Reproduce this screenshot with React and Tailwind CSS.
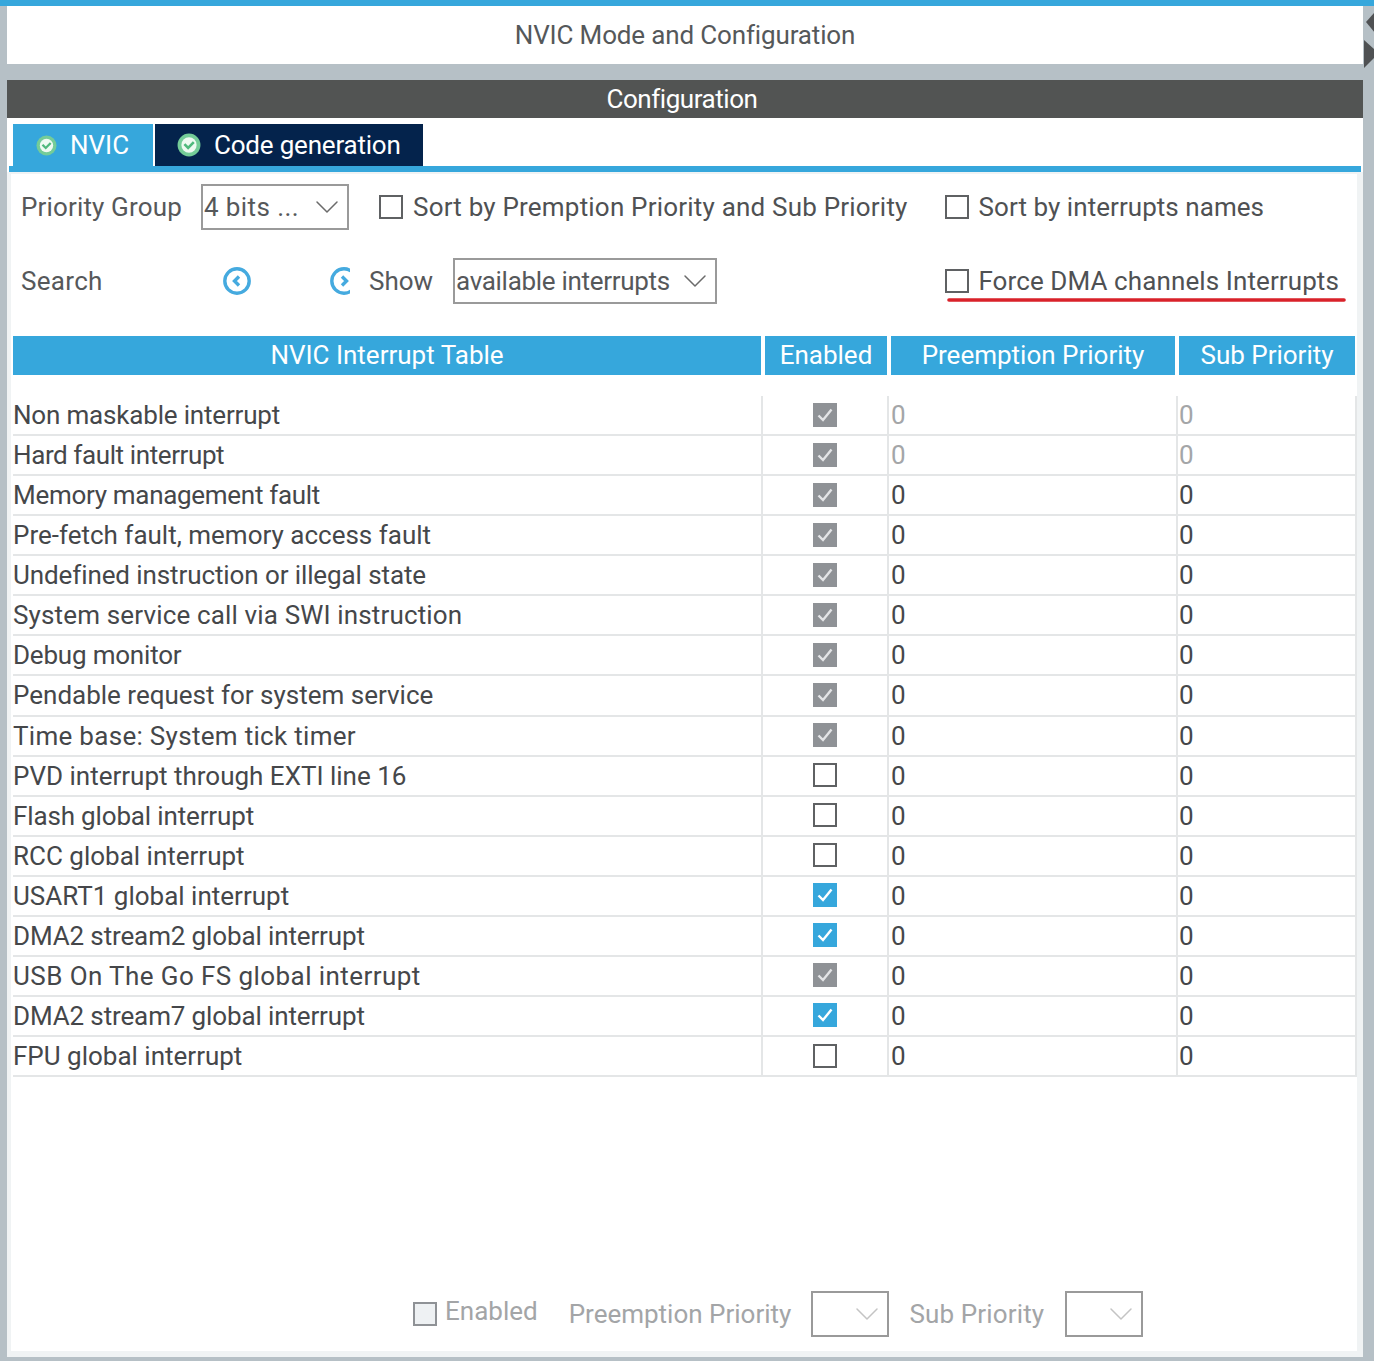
import { ChevronDown } from "lucide-react";

const font = "font-['Roboto','Liberation_Sans',sans-serif]";

const rows = [
  ["Non maskable interrupt", "gray", "tracking-[-0.18px]", true],
  ["Hard fault interrupt", "gray", "tracking-[-0.4px]", true],
  ["Memory management fault", "gray", "tracking-[-0.3px]"],
  ["Pre-fetch fault, memory access fault", "gray", ""],
  ["Undefined instruction or illegal state", "gray", "tracking-[-0.1px]"],
  ["System service call via SWI instruction", "gray", "tracking-[0.15px]"],
  ["Debug monitor", "gray", "tracking-[-0.2px]"],
  ["Pendable request for system service", "gray", ""],
  ["Time base: System tick timer", "gray", "tracking-[0.3px]"],
  ["PVD interrupt through EXTI line 16", "off", ""],
  ["Flash global interrupt", "off", "tracking-[-0.15px]"],
  ["RCC global interrupt", "off", ""],
  ["USART1 global interrupt", "blue", ""],
  ["DMA2 stream2 global interrupt", "blue", "tracking-[-0.13px]"],
  ["USB On The Go FS global interrupt", "gray", "tracking-[0.42px]"],
  ["DMA2 stream7 global interrupt", "blue", "tracking-[-0.13px]"],
  ["FPU global interrupt", "off", ""],
];

function Check({ state }) {
  if (state === "off") {
    return <span className="block w-6 h-6 mb-[2px] border-2 border-[#5f6163] bg-white" />;
  }
  return (
    <span
      className={`flex items-center justify-center w-6 h-6 mb-[2px] ${
        state === "blue" ? "bg-[#36a7dc]" : "bg-[#8f9296]"
      }`}
    >
      <svg width="18" height="16" viewBox="0 0 18 16" fill="none">
        <path d="M2.5 8.5 L7 13 L15.5 2.5" stroke={state === "blue" ? "#ffffff" : "#e3e4e6"} strokeWidth="2.4" />
      </svg>
    </span>
  );
}

function TabIcon({ size = 22 }) {
  return (
    <svg width={size} height={size} viewBox="0 0 22 22">
      <circle cx="11" cy="11" r="10.5" fill="#74cc98" />
      <circle cx="11" cy="11" r="7" fill="#eefaf2" />
      <path d="M6.8 10.2 L10.2 13.6 L15.4 8.4" fill="none" stroke="#4fb97d" strokeWidth="2.4" />
    </svg>
  );
}

function Select({ className, children, labelClass = "", chevronClass = "text-[#6b6b6b]" }) {
  return (
    <div className={`flex items-center justify-between h-[46px] border-2 border-[#9a9a9a] ${className}`}>
      <span className={`pl-[1px] text-[26px] text-[#56585a] whitespace-nowrap ${labelClass}`}>{children}</span>
      <ChevronDown className={`w-10 h-10 shrink-0 ${chevronClass}`} strokeWidth={0.9} />
    </div>
  );
}

function Box() {
  return <span className="block w-6 h-6 shrink-0 border-2 border-[#5f6163] bg-white" />;
}

function RoundArrow({ left }) {
  return (
    <svg width="28" height="28" viewBox="0 0 28 28" fill="none" className="shrink-0">
      <circle cx="14" cy="14" r="12.2" stroke="#45aadf" strokeWidth="3.4" />
      <path
        d={left ? "M16 9.5 L11.5 14 L16 18.5" : "M12 9.5 L16.5 14 L12 18.5"}
        stroke="#45aadf"
        strokeWidth="3.4"
      />
    </svg>
  );
}

export default function App() {
  return (
    <div className={`${font} relative flex flex-col w-[1374px] h-[1366px] bg-[#b6c0c6] overflow-hidden`}>
      <div className="h-[6px] shrink-0 bg-[#36a7dc]" />

      {/* 상단 타이틀 */}
      <div className="ml-[7px] mr-[11px] h-[58px] shrink-0 flex items-center justify-center bg-white text-[26px] tracking-[-0.15px] text-[#55585a]">
        NVIC Mode and Configuration
      </div>

      <div className="ml-[7px] mr-[11px] mt-4 h-[38px] shrink-0 flex items-center justify-center pr-[6px] bg-[#525453] text-[26px] tracking-[-0.45px] text-white">
        Configuration
      </div>

      <div className="ml-[7px] mr-[11px] h-[1239px] shrink-0 bg-white flex flex-col">
        {/* 탭 */}
        <div className="flex pl-[6px] pt-[6px] h-[48px] shrink-0">
          <div className="flex items-center w-[140px] pl-[23px] gap-[13px] bg-[#36a7dc] text-[26px] text-white">
            <TabIcon size={21} />
            <span>NVIC</span>
          </div>
          <div className="flex items-center w-[268px] ml-[2px] pl-[22px] gap-[13px] bg-[#04234c] text-[26px] tracking-[-0.2px] text-white">
            <TabIcon size={24} />
            <span>Code generation</span>
          </div>
        </div>
        <div className="ml-[2px] mr-[2px] h-[6px] shrink-0 bg-[#36a7dc]" />

        <div className="flex-1 flex flex-col pl-[4px] pr-[6px] pb-[6px] pt-[2px] bg-[#f0f3f4]">
          <div className="flex-1 flex flex-col bg-white text-[26px] text-[#56585a]">
            {/* 옵션 영역 */}
            <div className="relative mt-[10px] h-[46px] flex items-center pl-[10px]">
              <span className="w-[180px] whitespace-nowrap tracking-[0.15px]">Priority Group</span>
              <Select className="w-[148px]" labelClass="tracking-[0.4px]">4 bits ...</Select>
              <div className="ml-[30px] flex items-center gap-[10px] whitespace-nowrap tracking-[0.2px] text-[#4f5153]">
                <Box />
                Sort by Premption Priority and Sub Priority
              </div>
              <div className="ml-[37px] flex items-center gap-[10px] whitespace-nowrap tracking-[0.05px] text-[#4f5153]">
                <Box />
                Sort by interrupts names
              </div>
            </div>

            <div className="relative mt-[28px] h-[46px] flex items-center pl-[10px]">
              <span className="w-[202px] tracking-[0.3px]">Search</span>
              <RoundArrow left />
              <span className="ml-[79px] w-[20px] overflow-hidden">
                <RoundArrow />
              </span>
              <span className="ml-[19px] w-[84px]">Show</span>
              <Select className="w-[264px]" labelClass="tracking-[-0.3px]">available interrupts</Select>
              <div className="ml-auto mr-[18px] flex items-center gap-[9px] whitespace-nowrap tracking-[0.1px] text-[#4f5153]">
                <Box />
                Force DMA channels Interrupts
              </div>
              {/* 빨간 밑줄 */}
              <svg
                width="402"
                height="8"
                viewBox="0 0 402 8"
                fill="none"
                className="absolute left-[935px] top-[38px]"
              >
                <path d="M3 4 L398 4" stroke="#d9222a" strokeWidth="3.6" strokeLinecap="round" />
              </svg>
            </div>

            {/* 테이블 헤더 */}
            <div className="mt-[32px] ml-[2px] mr-[2px] grid grid-cols-[748px_122px_284px_176px] gap-x-[4px] h-[38px] shrink-0 text-white">
              <div className="flex items-center justify-center bg-[#36a7dc]">NVIC Interrupt Table</div>
              <div className="flex items-center justify-center bg-[#36a7dc]">Enabled</div>
              <div className="flex items-center justify-center bg-[#36a7dc]">Preemption Priority</div>
              <div className="flex items-center justify-center bg-[#36a7dc]">Sub Priority</div>
            </div>

            {/* 테이블 본문 */}
            <div className="mt-[22px] ml-[2px] flex flex-col text-[#45474a]">
              {rows.map(([name, state, spacing, dim]) => (
                <div
                  key={name}
                  className="grid grid-cols-[748px_126px_289px_181px] h-[40.07px] border-b-2 border-[#e4e6e7] items-stretch"
                >
                  <div className={`flex items-center whitespace-nowrap ${spacing}`}>{name}</div>
                  <div className="flex items-center justify-center border-l-2 border-[#e4e6e7]">
                    <Check state={state} />
                  </div>
                  <div className={`flex items-center pl-[2px] border-l-2 border-[#e4e6e7] ${dim ? "text-[#a4a6a8]" : ""}`}>
                    0
                  </div>
                  <div className={`flex items-center pl-[1px] border-x-2 border-[#e4e6e7] ${dim ? "text-[#a4a6a8]" : ""}`}>
                    0
                  </div>
                </div>
              ))}
            </div>

            {/* 하단 설정 */}
            <div className="mt-auto mb-[14px] h-[46px] flex items-center pl-[402px] text-[#a3a5a7]">
              <span className="w-6 h-6 border-2 border-[#8f9296] bg-[#eef1f3]" />
              <span className="ml-[8px] mb-[5px]">Enabled</span>
              <span className="ml-[31px]">Preemption Priority</span>
              <Select className="ml-[20px] w-[78px]" chevronClass="text-[#c4c4c4]" />
              <span className="ml-[20px] tracking-[0.15px]">Sub Priority</span>
              <Select className="ml-[21px] w-[78px]" chevronClass="text-[#c4c4c4]" />
            </div>
          </div>
        </div>
      </div>

      <div className="h-[5px] bg-white mt-[4px]" />

      {/* 오른쪽 접기 화살표 */}
      <svg width="12" height="62" viewBox="0 0 12 62" className="absolute left-[1363px] top-[8px]">
        <path d="M12 4 L3 14 L12 25 Z" fill="#4f5153" />
        <path d="M1 32 L12 42 L12 49 L1 60 Z" fill="#4f5153" />
      </svg>
    </div>
  );
}
